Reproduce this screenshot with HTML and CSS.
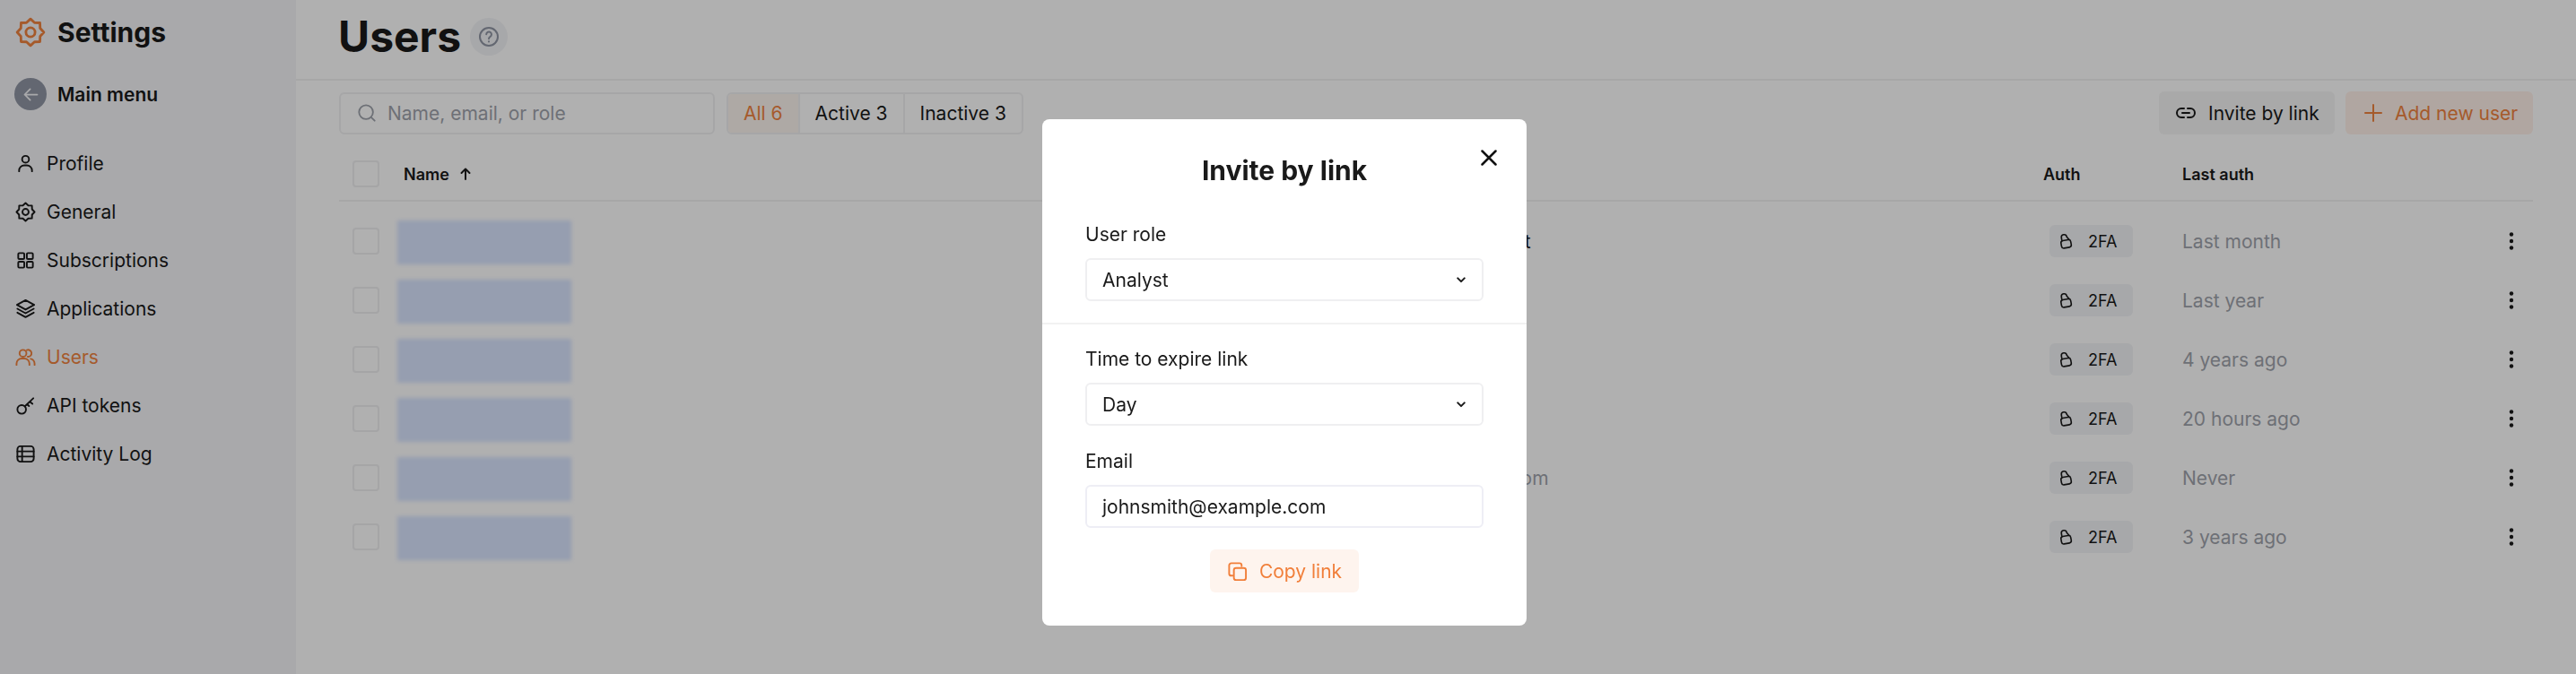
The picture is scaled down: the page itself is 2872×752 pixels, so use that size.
FILE: index.html
```html
<!DOCTYPE html>
<html lang="en">
<head>
  <meta charset="UTF-8">
  <title>Users</title>
  <link rel="stylesheet" href="styles.css">
</head>
<body>
  <svg class="icon-defs" aria-hidden="true">
    <symbol id="gear" viewBox="0 0 24 24">
      <polygon points="12,1.5 15.14,4.42 19.42,4.58 19.58,8.86 22.5,12 19.58,15.14 19.42,19.42 15.14,19.58 12,22.5 8.86,19.58 4.58,19.42 4.42,15.14 1.5,12 4.42,8.86 4.58,4.58 8.86,4.42"/>
      <circle cx="12" cy="12" r="3.6"/>
    </symbol>
    <symbol id="lock" viewBox="0 0 16 20">
      <g transform="rotate(-10 8 10)">
        <rect x="2.5" y="9" width="11" height="8.5" rx="2.5"/>
        <path d="M4 9 V5.5 a3 3 0 0 1 6 0 L12 9"/>
      </g>
    </symbol>
    <symbol id="dots" viewBox="0 0 8 20">
      <circle cx="4" cy="2.5" r="2.2"/>
      <circle cx="4" cy="10" r="2.2"/>
      <circle cx="4" cy="17.5" r="2.2"/>
    </symbol>
    <symbol id="chevron" viewBox="0 0 12 8">
      <path d="M1.5 1.5 6 6l4.5-4.5"/>
    </symbol>
  </svg>

  <div class="app">
    <aside class="sidebar">
      <div class="brand">
        <svg class="brand-icon"><use href="#gear"/></svg>
        <span>Settings</span>
      </div>
      <a class="back-link">
        <span class="back-circle">
          <svg viewBox="0 0 24 24"><path d="M20 12H4M11 5l-7 7 7 7"/></svg>
        </span>
        <span>Main menu</span>
      </a>
      <nav class="nav">
        <a class="nav-item">
          <svg viewBox="0 0 24 24"><circle cx="12" cy="7" r="4"/><path d="M4.5 21v-1a6 6 0 0 1 6-6h3a6 6 0 0 1 6 6v1"/></svg>
          Profile
        </a>
        <a class="nav-item">
          <svg viewBox="0 0 24 24"><use href="#gear"/></svg>
          General
        </a>
        <a class="nav-item">
          <svg viewBox="0 0 24 24"><rect x="3.5" y="3.5" width="7" height="7" rx="1.2"/><rect x="13.5" y="3.5" width="7" height="7" rx="1.2"/><rect x="3.5" y="13.5" width="7" height="7" rx="1.2"/><rect x="13.5" y="13.5" width="7" height="7" rx="1.2"/></svg>
          Subscriptions
        </a>
        <a class="nav-item">
          <svg viewBox="0 0 24 24"><path d="M12 2 22 7.5 12 13 2 7.5z"/><path d="M2.5 12 12 17.2 21.5 12"/><path d="M2.5 16.5 12 21.8 21.5 16.5"/></svg>
          Applications
        </a>
        <a class="nav-item active">
          <svg viewBox="0 0 24 24"><circle cx="9" cy="7.5" r="4"/><path d="M1.5 21v-1.500a6 6 0 0 1 6-6h3a6 6 0 0 1 6 6V21"/><path d="M13.500 3.700a4 4 0 1 1 1 7.700"/><path d="M18 14a6 6 0 0 1 4.500 5.500V21"/></svg>
          Users
        </a>
        <a class="nav-item">
          <svg viewBox="0 0 24 24"><circle cx="7.500" cy="16.500" r="5"/><path d="M11 13 21 3.500M17 7.500l3 2.500M14 10.500l2 2"/></svg>
          API tokens
        </a>
        <a class="nav-item">
          <svg viewBox="0 0 24 24"><rect x="2.500" y="3" width="19" height="18" rx="3.500"/><path d="M2.500 9h19M2.500 15h19M8 3v18"/></svg>
          Activity Log
        </a>
      </nav>
    </aside>

    <main class="main">
      <header class="page-header">
        <h1>Users</h1>
        <span class="help-badge">
          <svg viewBox="0 0 24 24"><circle cx="12" cy="12" r="10"/><path d="M9.200 9.300a2.900 2.900 0 1 1 4.400 2.500c-1 .6-1.600 1.200-1.600 2.400M12 17.300v.2"/></svg>
        </span>
      </header>

      <div class="toolbar">
        <label class="search">
          <svg viewBox="0 0 24 24"><circle cx="11" cy="11" r="8.500"/><path d="m17.500 17.500 4 4"/></svg>
          <span>Name, email, or role</span>
        </label>
        <div class="tabs">
          <span class="tab active">All 6</span>
          <span class="tab">Active 3</span>
          <span class="tab">Inactive 3</span>
        </div>
        <div class="toolbar-actions">
          <button class="btn btn-gray">
            <svg viewBox="0 0 24 24"><path d="M10 7H7a5 5 0 0 0 0 10h3M14 7h3a5 5 0 0 1 0 10h-3M8 12h8"/></svg>
            Invite by link
          </button>
          <button class="btn btn-orange">
            <svg viewBox="0 0 24 24"><path d="M12 3v18M3 12h18"/></svg>
            Add new user
          </button>
        </div>
      </div>

      <section class="table">
        <div class="table-head">
          <span class="checkbox"></span>
          <span class="head-name">Name
            <svg viewBox="0 0 12 14"><path d="M6 13V1.500M1.500 6 6 1.500 10.500 6"/></svg>
          </span>
          <span></span>
          <span>Auth</span>
          <span>Last auth</span>
          <span></span>
        </div>
        <div class="table-rows">
          <div class="row">
            <span class="checkbox"></span>
            <span class="blurred"></span>
            <span class="role">Analyst</span>
            <span class="badge"><svg><use href="#lock"/></svg>2FA</span>
            <span class="muted">Last month</span>
            <svg class="dots"><use href="#dots"/></svg>
          </div>
          <div class="row">
            <span class="checkbox"></span>
            <span class="blurred"></span>
            <span></span>
            <span class="badge"><svg><use href="#lock"/></svg>2FA</span>
            <span class="muted">Last year</span>
            <svg class="dots"><use href="#dots"/></svg>
          </div>
          <div class="row">
            <span class="checkbox"></span>
            <span class="blurred"></span>
            <span></span>
            <span class="badge"><svg><use href="#lock"/></svg>2FA</span>
            <span class="muted">4 years ago</span>
            <svg class="dots"><use href="#dots"/></svg>
          </div>
          <div class="row">
            <span class="checkbox"></span>
            <span class="blurred"></span>
            <span></span>
            <span class="badge"><svg><use href="#lock"/></svg>2FA</span>
            <span class="muted">20 hours ago</span>
            <svg class="dots"><use href="#dots"/></svg>
          </div>
          <div class="row">
            <span class="checkbox"></span>
            <span class="blurred"></span>
            <span class="muted">user@example.com</span>
            <span class="badge"><svg><use href="#lock"/></svg>2FA</span>
            <span class="muted">Never</span>
            <svg class="dots"><use href="#dots"/></svg>
          </div>
          <div class="row">
            <span class="checkbox"></span>
            <span class="blurred"></span>
            <span></span>
            <span class="badge"><svg><use href="#lock"/></svg>2FA</span>
            <span class="muted">3 years ago</span>
            <svg class="dots"><use href="#dots"/></svg>
          </div>
        </div>
      </section>
    </main>
  </div>

  <!-- Modal -->
  <div class="overlay">
    <div class="modal">
      <button class="modal-close" aria-label="Close">
        <svg viewBox="0 0 18 18"><path d="M1.500 1.500l15 15M16.500 1.500l-15 15"/></svg>
      </button>
      <div class="modal-top">
        <h2>Invite by link</h2>
        <div class="field">
          <span class="field-label">User role</span>
          <div class="select">Analyst <svg><use href="#chevron"/></svg></div>
        </div>
      </div>
      <div class="modal-bottom">
        <div class="field">
          <span class="field-label">Time to expire link</span>
          <div class="select">Day <svg><use href="#chevron"/></svg></div>
        </div>
        <div class="field">
          <span class="field-label">Email</span>
          <div class="select select-input">johnsmith@example.com</div>
        </div>
        <button class="copy-btn">
          <svg viewBox="0 0 24 24"><path d="M6.500 17H5a2.500 2.500 0 0 1-2.500-2.500V5A2.500 2.500 0 0 1 5 2.500h9.500A2.500 2.500 0 0 1 17 5v1"/><rect x="8" y="8" width="14" height="14" rx="2.500"/></svg>
          Copy link
        </button>
      </div>
    </div>
  </div>
</body>
</html>
```

FILE: styles.css
```css
/* Base */
* {
  margin: 0;
  padding: 0;
  box-sizing: border-box;
}

html, body {
  height: 100%;
  overflow: hidden;
}

body {
  font-family: Inter, "Noto Sans", sans-serif;
  font-size: 21px;
  color: #1a1a1a;
  background-color: #fff;
}

svg {
  display: block;
  fill: none;
  stroke: currentColor;
  stroke-linecap: round;
  stroke-linejoin: round;
  stroke-width: 2;
  flex-shrink: 0;
}

.icon-defs {
  position: absolute;
  width: 0;
  height: 0;
}

button {
  font: inherit;
  border: none;
  background: none;
  color: inherit;
}

/* Layout */
.app {
  display: flex;
  height: 752px;
}

/* Sidebar */
.sidebar {
  width: 330px;
  flex-shrink: 0;
  background-color: #f5f5f8;
  padding: 19px 17px 0;
}

.brand {
  display: flex;
  align-items: center;
  gap: 13px;
  height: 34px;
  font-size: 30px;
  font-weight: 700;
}

.brand-icon {
  width: 34px;
  height: 34px;
  color: #f0833f;
}

.back-link {
  display: flex;
  align-items: center;
  gap: 12px;
  margin: 34px 0 0 -1px;
  font-weight: 600;
}

.back-circle {
  display: flex;
  align-items: center;
  justify-content: center;
  width: 36px;
  height: 36px;
  border-radius: 50%;
  background-color: #9096a4;
  color: #f5f5f8;
}

.back-circle svg {
  width: 21px;
  height: 21px;
}

.nav {
  margin-top: 32px;
}

.nav-item {
  display: flex;
  align-items: center;
  gap: 12px;
  height: 54px;
}

.nav-item svg {
  width: 23px;
  height: 23px;
}

.nav-item.active {
  color: #f0833f;
}

/* Main */
.main {
  flex: 1;
  min-width: 0;
}

.page-header {
  display: flex;
  align-items: center;
  gap: 10px;
  height: 90px;
  padding: 0 0 6px 47px;
  border-bottom: 2px solid #f2f2f2;
}

.page-header h1 {
  font-size: 48px;
  font-weight: 700;
  line-height: 1;
}

.help-badge {
  display: flex;
  align-items: center;
  justify-content: center;
  width: 42px;
  height: 42px;
  border-radius: 50%;
  background-color: #f2f3f6;
  color: #9096a4;
}

.help-badge svg {
  width: 24px;
  height: 24px;
}

/* Toolbar */
.toolbar {
  display: flex;
  align-items: center;
  gap: 13px;
  padding: 12px 48px 0;
}

.search {
  display: flex;
  align-items: center;
  gap: 12px;
  width: 419px;
  height: 47px;
  padding: 0 18px;
  border: 2px solid #f1f1f2;
  border-radius: 6px;
  color: #9fa3ac;
}

.search svg {
  width: 22px;
  height: 22px;
}

.tabs {
  display: flex;
  height: 47px;
  border: 2px solid #f1f1f2;
  border-radius: 6px;
  overflow: hidden;
}

.tab {
  display: flex;
  align-items: center;
  padding: 0 17px;
  border-left: 2px solid #f1f1f2;
}

.tab:first-child {
  border-left: none;
}

.tab.active {
  background-color: #fdf5ef;
  color: #f0833f;
}

.toolbar-actions {
  display: flex;
  gap: 12px;
  margin-left: auto;
}

.btn {
  display: flex;
  align-items: center;
  height: 48px;
  border-radius: 6px;
}

.btn-gray {
  gap: 13px;
  width: 196px;
  padding-left: 18px;
  background-color: #f5f5f5;
}

.btn-orange {
  gap: 12px;
  width: 209px;
  padding-left: 19px;
  background-color: #fff1e9;
  color: #f0833f;
}

.btn svg {
  width: 24px;
  height: 24px;
}

/* Table */
.table {
  margin: 0 48px;
}

.table-head,
.row {
  display: grid;
  grid-template-columns: 65px 1087px 748px 155px 1fr 48px;
  align-items: center;
}

.table-head {
  height: 75px;
  padding-top: 15px;
  font-size: 18px;
  font-weight: 600;
  border-bottom: 2px solid #f2f2f2;
}

.head-name {
  display: flex;
  align-items: center;
  gap: 12px;
  margin-left: 7px;
}

.head-name svg {
  width: 12px;
  height: 14px;
}

.table-rows {
  padding-top: 11px;
}

.row {
  height: 66px;
}

.checkbox {
  display: block;
  width: 30px;
  height: 30px;
  margin-left: 15px;
  border: 2px solid #efeff1;
  border-radius: 4px;
}

.blurred {
  display: block;
  width: 194px;
  height: 49px;
  margin-top: 2px;
  background-color: #d9e5ff;
  filter: blur(2px);
}

.role {
  margin-left: 103px;
  color: #1a1a1a;
}

.badge {
  display: flex;
  align-items: center;
  gap: 17px;
  width: 93px;
  height: 36px;
  margin-left: 7px;
  padding-left: 10px;
  border-radius: 6px;
  background-color: #f2f3f6;
  font-size: 18px;
}

.badge svg {
  width: 16px;
  height: 20px;
  stroke-width: 1.6;
}

.muted {
  color: #9fa3ac;
}

.dots {
  width: 8px;
  height: 20px;
  justify-self: center;
  fill: currentColor;
  stroke: none;
}

/* Modal */
.overlay {
  position: fixed;
  inset: 0;
  display: flex;
  justify-content: center;
  padding-right: 8px;
  background-color: rgba(0, 0, 0, 0.31);
}

.modal {
  position: relative;
  width: 540px;
  height: 565px;
  margin-top: 133px;
  background-color: #fff;
  border-radius: 8px;
  overflow: hidden;
}

.modal-close {
  position: absolute;
  top: 34px;
  right: 33px;
  width: 18px;
  height: 18px;
  color: #111;
}

.modal-close svg {
  width: 18px;
  height: 18px;
  stroke-width: 2.500;
}

.modal-top {
  padding: 38px 48px 24px;
  border-bottom: 2px solid #f2f2f2;
}

.modal-top h2 {
  font-size: 30px;
  font-weight: 700;
  line-height: 38px;
  text-align: center;
  margin-bottom: 40px;
}

.modal-bottom {
  display: flex;
  flex-direction: column;
  gap: 27px;
  padding: 26px 48px 0;
}

.field {
  display: flex;
  flex-direction: column;
  gap: 13px;
}

.field-label {
  line-height: 26px;
}

.select {
  display: flex;
  align-items: center;
  justify-content: space-between;
  height: 48px;
  padding: 0 18px 0 17px;
  border: 2px solid #efeff1;
  border-radius: 6px;
}

.select svg {
  width: 10px;
  height: 7px;
  stroke-width: 2.400;
}

.select-input {
  border-color: #eeeef5;
}

.copy-btn {
  display: flex;
  align-items: center;
  gap: 13px;
  align-self: center;
  height: 48px;
  margin-top: -3px;
  padding: 0 19px;
  border-radius: 6px;
  background-color: #fef4ee;
  color: #f17f3a;
}

.copy-btn svg {
  width: 23px;
  height: 23px;
}
```
